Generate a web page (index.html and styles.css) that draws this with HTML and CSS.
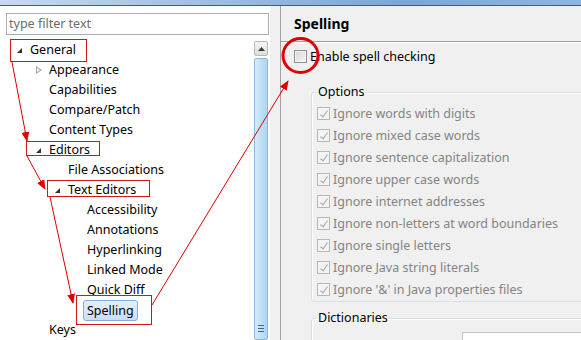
FILE: index.html
```html
<!DOCTYPE html>
<html lang="en">
  <head>
    <meta charset="UTF-8" />
    <title>Preferences - Spelling</title>
    <link rel="stylesheet" href="styles.css">
  </head>
  <body>
    <div class="titlebar"></div>
    <div class="main">
      <!-- 왼쪽 트리 -->
      <div class="left">
        <div class="filter">type filter text</div>
        <div class="treebox">
          <div class="tree">
            <div class="row lvl0"><span class="tog open"></span>General</div>
            <div class="row lvl1"><span class="tog closed"></span>Appearance</div>
            <div class="row lvl1"><span class="tog"></span>Capabilities</div>
            <div class="row lvl1"><span class="tog"></span>Compare/Patch</div>
            <div class="row lvl1"><span class="tog"></span>Content Types</div>
            <div class="row lvl1"><span class="tog open"></span>Editors</div>
            <div class="row lvl2"><span class="tog"></span>File Associations</div>
            <div class="row lvl2"><span class="tog open"></span>Text Editors</div>
            <div class="row lvl3"><span class="tog"></span>Accessibility</div>
            <div class="row lvl3"><span class="tog"></span>Annotations</div>
            <div class="row lvl3"><span class="tog"></span>Hyperlinking</div>
            <div class="row lvl3"><span class="tog"></span>Linked Mode</div>
            <div class="row lvl3"><span class="tog"></span>Quick Diff</div>
            <div class="row lvl3"><span class="tog"></span><span class="sel">Spelling</span></div>
            <div class="row lvl1"><span class="tog"></span>Keys</div>
          </div>
          <div class="vscroll">
            <div class="sbtn">
              <svg width="7" height="4" viewBox="0 0 7 4"><path d="M0 4 L3.5 0 L7 4 Z" fill="#3a3a3a"/></svg>
            </div>
            <div class="thumb">
              <div class="grip"><i></i><i></i><i></i></div>
            </div>
          </div>
        </div>
      </div>
      <div class="sash"></div>
      <!-- 오른쪽 설정 페이지 -->
      <div class="page">
        <div class="pagetitle">Spelling</div>
        <div class="pagebody">
          <label class="check enable"><span class="cb"></span>Enable spell checking</label>
          <fieldset class="group options">
            <legend>Options</legend>
            <label class="check off"><span class="cb on"></span>Ignore words with digits</label>
            <label class="check off"><span class="cb on"></span>Ignore mixed case words</label>
            <label class="check off"><span class="cb on"></span>Ignore sentence capitalization</label>
            <label class="check off"><span class="cb on"></span>Ignore upper case words</label>
            <label class="check off"><span class="cb on"></span>Ignore internet addresses</label>
            <label class="check off"><span class="cb on"></span>Ignore non-letters at word boundaries</label>
            <label class="check off"><span class="cb on"></span>Ignore single letters</label>
            <label class="check off"><span class="cb on"></span>Ignore Java string literals</label>
            <label class="check off"><span class="cb on"></span>Ignore '&amp;' in Java properties files</label>
          </fieldset>
          <fieldset class="group dicts">
            <legend>Dictionaries</legend>
            <div class="combo"></div>
          </fieldset>
        </div>
      </div>
    </div>

    <!-- 빨간 표시 (주석) -->
    <svg class="marks" width="581" height="340" viewBox="0 0 581 340">
      <defs>
        <marker id="head" markerWidth="10" markerHeight="8" refX="9" refY="4" orient="auto" markerUnits="userSpaceOnUse">
          <path d="M0 0 L10 4 L0 8 Z" fill="#e00000"/>
        </marker>
      </defs>
      <g fill="none" stroke="#cc1a1a" stroke-width="1">
        <rect x="10.5" y="39.5" width="76" height="22"/>
        <rect x="26.5" y="141.5" width="73" height="14"/>
        <rect x="47.5" y="180.5" width="102" height="16"/>
        <rect x="76.5" y="295.5" width="75" height="29"/>
      </g>
      <g stroke="#d80000" stroke-width="1" marker-end="url(#head)">
        <line x1="12" y1="62" x2="27" y2="141"/>
        <line x1="27" y1="156" x2="45" y2="189"/>
        <line x1="50" y1="197" x2="73" y2="303"/>
        <line x1="152" y1="305" x2="288" y2="81"/>
      </g>
      <ellipse cx="300.5" cy="55.5" rx="17.5" ry="17" fill="none" stroke="#e00000" stroke-width="3"/>
    </svg>
  </body>
</html>
```

FILE: styles.css
```css
* {
  box-sizing: border-box;
}

body {
  margin: 0;
  width: 581px;
  height: 340px;
  overflow: hidden;
  position: relative;
  background-color: #f0f0f0;
  font-family: "Noto Sans", "Liberation Sans", sans-serif;
  font-size: 12.5px;
  color: #000;
}

/* 창 위쪽 파란 띠 */
.titlebar {
  height: 6px;
  background: linear-gradient(to right, #c9d9ea, #9bbbe0 40%, #7aa6d8 70%, #8fb6e2);
  border-bottom: 1px solid #3f5f80;
}

.main {
  display: flex;
  height: 334px;
}

/* 왼쪽 */
.left {
  width: 270px;
  background-color: white;
  display: flex;
  flex-direction: column;
}
.filter {
  margin: 7px 1px 0 6px;
  height: 22px;
  border: 1px solid #abadb3;
  padding-left: 2px;
  line-height: 19px;
  font-size: 12.5px;
  color: #6d6d6d;
}
.treebox {
  display: flex;
  flex: 1;
  margin-top: 5px;
  overflow: hidden;
}
.tree {
  flex: 1;
}
.row {
  height: 20px;
  line-height: 20px;
  display: flex;
  align-items: center;
  white-space: nowrap;
}
.lvl0 { padding-left: 11px; }
.lvl1 { padding-left: 30px; }
.lvl2 { padding-left: 49px; }
.lvl3 { padding-left: 68px; }

.tog {
  width: 19px;
  height: 20px;
  position: relative;
  flex: none;
}
.tog.open::after {
  content: "";
  position: absolute;
  left: 6px;
  top: 8px;
  border-style: solid;
  border-width: 0 0 5px 5px;
  border-color: transparent transparent #333 transparent;
}
.tog.closed::after {
  content: "";
  position: absolute;
  left: 6px;
  top: 6px;
  width: 6px;
  height: 8px;
  background: #a6a6a6;
  clip-path: polygon(0 0, 100% 50%, 0 100%, 0 0, 1px 2px, 1px calc(100% - 2px), calc(100% - 2px) 50%, 1px 2px);
}
.sel {
  margin-left: -4px;
  padding: 0 3px;
  height: 21px;
  line-height: 19px;
  border: 1px solid #84acdd;
  border-radius: 3px;
  background: linear-gradient(#e4effd, #c9defa);
}

/* 스크롤바 */
.vscroll {
  width: 17px;
  padding: 1px 2px 0 1px;
  display: flex;
  flex-direction: column;
}
.sbtn {
  height: 15px;
  border: 1px solid #b8b8b8;
  border-radius: 2px;
  background: linear-gradient(#f6f6f6, #dcdcdc);
  display: flex;
  align-items: center;
  justify-content: center;
}
.thumb {
  flex: 1;
  margin-top: 2px;
  border: 1px solid #8fb6d8;
  border-radius: 2px;
  background: linear-gradient(to right, #d6ecfb, #bfe0f7 50%, #aed6f3);
  display: flex;
  flex-direction: column;
  justify-content: flex-end;
  align-items: center;
  padding-bottom: 7px;
}
.grip i {
  display: block;
  width: 6px;
  height: 1px;
  background: #3d6a8f;
  margin-top: 2px;
}

.sash {
  width: 11px;
  background-color: #f0f0f0;
  border-right: 1px solid #a0a0a0;
}

/* 오른쪽 */
.page {
  flex: 1;
  overflow: hidden;
}
.pagetitle {
  height: 36px;
  padding-left: 13px;
  line-height: 35px;
  font-weight: bold;
  font-size: 14px;
  border-bottom: 1px solid #a0a0a0;
  box-shadow: 0 1px 0 white;
}
.pagebody {
  padding-left: 13px;
}
.check {
  display: flex;
  align-items: center;
  height: 22px;
  white-space: nowrap;
}
.check.enable {
  margin-top: 3px;
}
.check.off {
  color: #848484;
}
.cb {
  width: 13px;
  height: 13px;
  margin-right: 3px;
  border: 1px solid #8e8f8f;
  background: linear-gradient(135deg, #d3d6da, #f8f8f8);
  box-shadow: inset 0 0 0 1px #f4f4f4;
  flex: none;
  position: relative;
}
.check.off .cb {
  border-color: #b7b7b7;
  background: #f4f4f4;
  box-shadow: none;
}
.cb.on::after {
  content: "";
  position: absolute;
  left: 4px;
  top: 1px;
  width: 3px;
  height: 7px;
  border: solid #a9a9a9;
  border-width: 0 1.5px 1.5px 0;
  transform: rotate(35deg);
}

.group {
  width: 300px;
  margin: 17px 0 0 17px;
  padding: 2px 0 1px 5px;
  border: 1px solid #d5dfe5;
  border-radius: 3px;
  box-shadow: inset 1px 1px 0 white;
}
.group legend {
  padding: 0 1px;
  line-height: 16px;
}
.dicts {
  margin-top: 8px;
  height: 60px;
  padding-top: 6px;
}
.combo {
  margin-left: 145px;
  width: 130px;
  height: 22px;
  border: 1px solid #c5c5c5;
  background: white;
}

/* 빨간 표시 */
.marks {
  position: absolute;
  top: 0;
  left: 0;
  pointer-events: none;
}
```
